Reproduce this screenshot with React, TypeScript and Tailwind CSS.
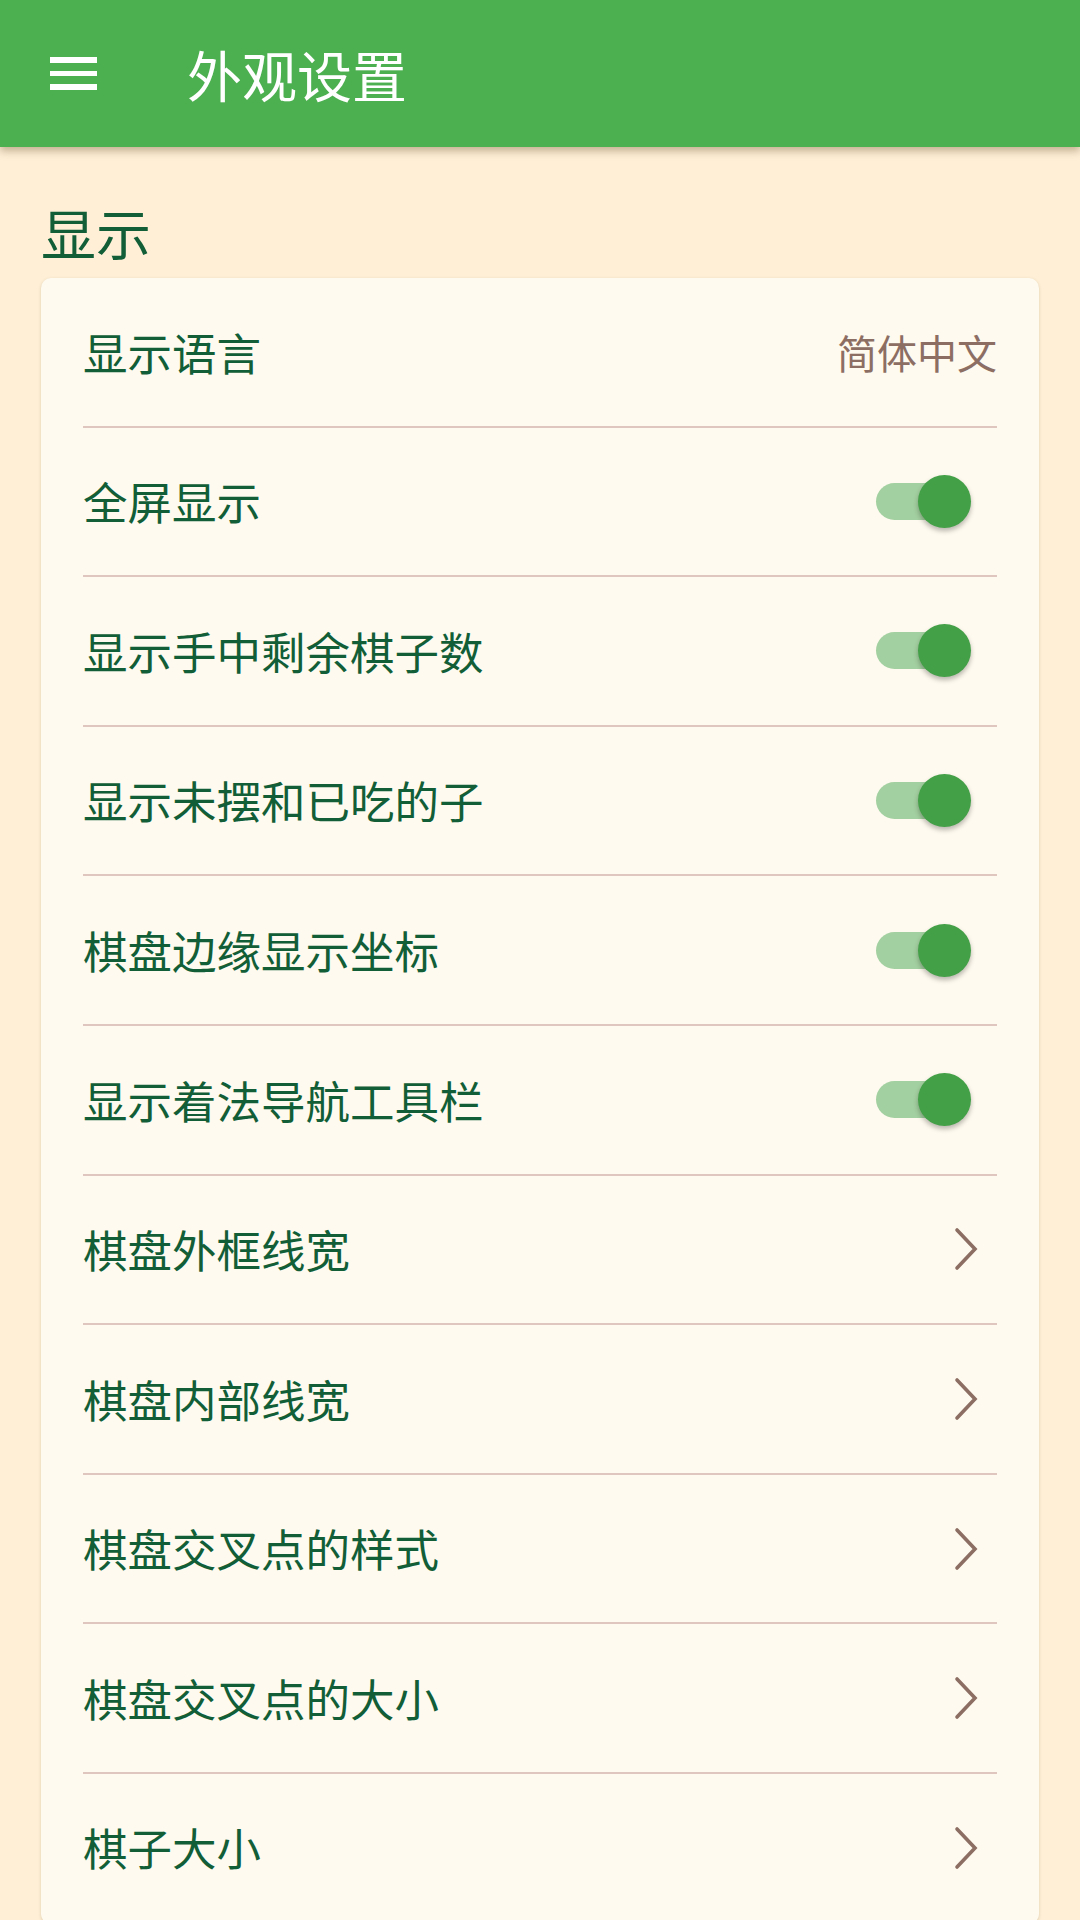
import React from 'react'

type Row =
  | { label: string; kind: 'value'; value: string }
  | { label: string; kind: 'switch'; on: boolean }
  | { label: string; kind: 'link' }

const rows: Row[] = [
  { label: '显示语言', kind: 'value', value: '简体中文' },
  { label: '全屏显示', kind: 'switch', on: true },
  { label: '显示手中剩余棋子数', kind: 'switch', on: true },
  { label: '显示未摆和已吃的子', kind: 'switch', on: true },
  { label: '棋盘边缘显示坐标', kind: 'switch', on: true },
  { label: '显示着法导航工具栏', kind: 'switch', on: true },
  { label: '棋盘外框线宽', kind: 'link' },
  { label: '棋盘内部线宽', kind: 'link' },
  { label: '棋盘交叉点的样式', kind: 'link' },
  { label: '棋盘交叉点的大小', kind: 'link' },
  { label: '棋子大小', kind: 'link' },
]

const font = { fontFamily: '"Noto Sans CJK SC", "Noto Sans", sans-serif' }

function Toggle() {
  return (
    <div className="relative mr-[26px] h-[53px] w-[95px]">
      <div className="absolute left-0 top-[8px] h-[37px] w-[89px] rounded-full bg-[#a3d0a0]" />
      <div className="absolute right-0 top-0 h-[53px] w-[53px] rounded-full bg-[#43a047] shadow-[0_3px_5px_rgba(0,0,0,0.28)]" />
    </div>
  )
}

function Chevron() {
  return (
    <svg className="mr-[19px]" width="24" height="44" viewBox="0 0 24 44" fill="none">
      <path
        d="M3 3 L21 22 L3 41"
        stroke="#8d6e63"
        strokeWidth="3.6"
        strokeLinecap="round"
        strokeLinejoin="miter"
      />
    </svg>
  )
}

export default function App() {
  return (
    <div className="h-[1920px] w-[1080px] overflow-hidden bg-[#feefd6]" style={font}>
      {/* top bar */}
      <div className="relative z-10 flex h-[147px] items-center bg-[#4caf50] shadow-[0_4px_8px_rgba(90,60,20,0.35)]">
        <div className="ml-[50px] flex w-[47px] flex-col gap-[8px]">
          <span className="block h-[5.5px] bg-white" />
          <span className="block h-[5.5px] bg-white" />
          <span className="block h-[5.5px] bg-white" />
        </div>
        <h1 className="ml-[90px] text-[55px] leading-none text-white">外观设置</h1>
      </div>

      <div className="px-[41px] pt-[57px]">
        <h2 className="text-[55px] leading-none text-[#115e37]">显示</h2>

        <div className="mt-[19px] rounded-[10px] bg-[#fefaef] px-[42px] shadow-[0_1px_3px_rgba(120,90,40,0.25)]">
          {rows.map((row) => (
            <div
              key={row.label}
              className="flex h-[149.6px] items-center justify-between border-b-2 border-[#dfc6bf]"
            >
              <span className="text-[44.5px] leading-none text-[#115e37]">{row.label}</span>
              {row.kind === 'value' && (
                <span className="text-[40px] leading-none text-[#8d6e63]">{row.value}</span>
              )}
              {row.kind === 'switch' && <Toggle />}
              {row.kind === 'link' && <Chevron />}
            </div>
          ))}
        </div>
      </div>
    </div>
  )
}
